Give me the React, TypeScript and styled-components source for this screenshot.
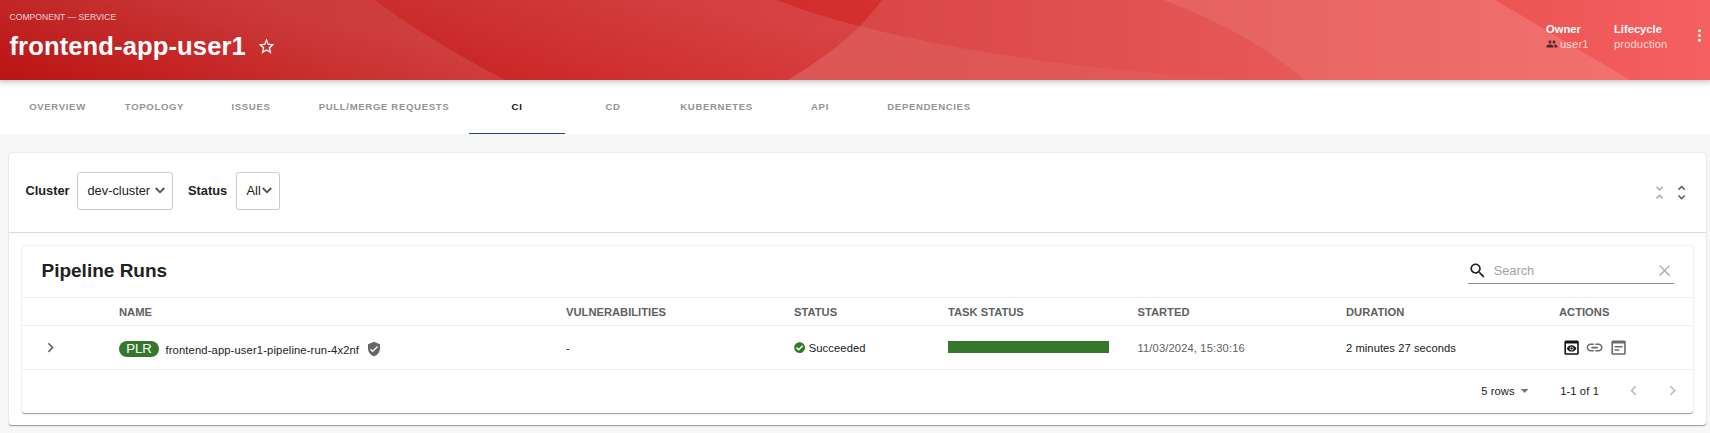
import React from "react";
import styled, { createGlobalStyle } from "styled-components";

const GlobalStyle = createGlobalStyle`
  *, *::before, *::after { box-sizing: border-box; }
  html, body, #root { height: 100%; }
  body {
    margin: 0;
    overflow: hidden;
    background: #f7f7f7;
    color: #212121;
    font-family: "Liberation Sans", Arial, sans-serif;
    font-size: 11.2px;
    line-height: 16px;
  }
`;

const Page = styled.div`
  display: flex;
  flex-direction: column;
  height: 433px;
`;

const Header = styled.header`
  position: relative;
  z-index: 2;
  flex: none;
  display: flex;
  justify-content: space-between;
  height: 80px;
  padding: 0 1px 0 9.5px;
  color: #fff;
  box-shadow: 0 0 6.4px 2.4px rgba(20, 20, 20, 0.3);
`;

const Waves = styled.svg`
  position: absolute;
  inset: 0;
  width: 100%;
  height: 100%;
  z-index: -1;
`;

const TitleBlock = styled.div`
  display: flex;
  flex-direction: column;
  padding-top: 11px;
`;

const Kind = styled.div`
  font-size: 8.6px;
  letter-spacing: 0px;
  line-height: 12px;
  color: rgba(255, 255, 255, 0.8);
`;

const TitleRow = styled.div`
  display: flex;
  align-items: center;
  gap: 11px;
  height: 32px;
  margin-top: 7px;
`;

const Title = styled.h1`
  margin: 0;
  font-size: 25.6px;
  line-height: 32px;
  font-weight: 700;
  letter-spacing: 0.1px;
`;

const Icon = styled.svg<{ $size: number; $color?: string }>`
  display: block;
  flex: none;
  width: ${(p) => p.$size}px;
  height: ${(p) => p.$size}px;
  fill: ${(p) => p.$color ?? "currentColor"};
`;

const HeaderMeta = styled.div`
  display: flex;
  align-items: flex-start;
  padding-top: 21px;
`;

const MetaItem = styled.div<{ $width: number }>`
  width: ${(p) => p.$width}px;
`;

const MetaLabel = styled.div`
  height: 15px;
  font-weight: 700;
`;

const MetaValue = styled.div`
  display: flex;
  align-items: center;
  gap: 2px;
  height: 16px;
  color: rgba(255, 255, 255, 0.75);
  letter-spacing: 0.01071em;
`;

const KebabSlot = styled.div`
  padding-top: 5px;
`;

const Tabs = styled.nav`
  flex: none;
  display: flex;
  height: 54px;
  padding-left: 9px;
  background: #fff;
`;

const Tab = styled.div<{ $width: number; $active?: boolean }>`
  display: flex;
  justify-content: center;
  width: ${(p) => p.$width}px;
  padding-top: 19px;
  border-bottom: 1px solid ${(p) => (p.$active ? "#1b4480" : "transparent")};
  color: ${(p) => (p.$active ? "#181818" : "#949494")};
  font-size: 9.6px;
  font-weight: 700;
  letter-spacing: 0.64px;
`;

const paper = `
  background: #fff;
  border-radius: 3.2px;
  box-shadow: 0 1.6px 0.8px -0.8px rgba(0, 0, 0, 0.2), 0 0.8px 0.8px rgba(0, 0, 0, 0.14),
    0 0.8px 2.4px rgba(0, 0, 0, 0.12);
`;

const Panel = styled.main`
  ${paper}
  display: flex;
  flex-direction: column;
  width: 1697px;
  height: 272px;
  margin: 19px 0 0 9px;
`;

const FilterBar = styled.div`
  display: flex;
  align-items: center;
  height: 80px;
  padding: 0 15px 4px 16.5px;
  border-bottom: 1px solid #dcdcdc;
`;

const FilterLabel = styled.label<{ $width: number }>`
  width: ${(p) => p.$width}px;
  font-size: 12.8px;
  font-weight: 700;
`;

const Select = styled.div<{ $width: number; $after?: number }>`
  display: flex;
  align-items: center;
  justify-content: space-between;
  width: ${(p) => p.$width}px;
  height: 38px;
  margin-right: ${(p) => p.$after ?? 0}px;
  padding: 0 7px 0 9.5px;
  border: 1px solid #c5ccd6;
  border-radius: 3px;
  font-size: 12.8px;
  white-space: nowrap;
`;

const ExpandTools = styled.div`
  display: flex;
  gap: 2.6px;
  margin: 4px 0 0 auto;
`;

const TableCard = styled.section`
  ${paper}
  width: 1671px;
  height: 167px;
  margin: 12.5px 0 0 13px;
`;

const CardToolbar = styled.div`
  display: flex;
  align-items: center;
  justify-content: space-between;
  height: 52px;
  padding: 0 19px 0 19.5px;
  border-bottom: 1px solid #efefef;
`;

const CardTitle = styled.h2`
  margin: 0;
  font-size: 19px;
  line-height: 24px;
  font-weight: 700;
`;

const SearchField = styled.div`
  display: flex;
  align-items: center;
  width: 206px;
  height: 26px;
  border-bottom: 1px solid #8c8c8c;
  font-size: 12.8px;
  color: #a3a3a3;
`;

const SearchText = styled.span`
  flex: 1;
  padding-left: 6.5px;
`;

const ClearSlot = styled.div`
  padding-top: 1px;
`;

const columns = "97px 447px 228px 154px 189.5px 208.5px 213px 1fr";

const HeadRow = styled.div`
  display: grid;
  grid-template-columns: ${columns};
  align-items: center;
  height: 28px;
  padding-top: 1px;
  border-bottom: 1px solid #efefef;
  color: #616161;
  font-weight: 700;
`;

const BodyRow = styled.div`
  display: grid;
  grid-template-columns: ${columns};
  align-items: center;
  height: 44px;
  padding-top: 2px;
  border-bottom: 1px solid #efefef;
`;

const Expander = styled.div`
  padding-left: 19px;
`;

const NameCell = styled.div`
  display: flex;
  align-items: center;
  height: 16px;
  margin-top: 2px;
`;

const Badge = styled.span`
  display: flex;
  align-items: center;
  justify-content: center;
  width: 40px;
  height: 16px;
  margin-right: 6.5px;
  border-radius: 16px;
  background: #35772b;
  color: #fff;
  font-size: 13.2px;
`;

const RunName = styled.span`
  margin-right: 7px;
  padding-top: 2px;
  letter-spacing: 0.0125em;
`;

const StatusCell = styled.div`
  display: flex;
  align-items: center;
  gap: 3.5px;
  letter-spacing: 0.01em;
`;

const TaskBar = styled.div`
  width: 161px;
  height: 12px;
  margin-bottom: 2px;
  background: #35772b;
`;

const Started = styled.div`
  color: #616161;
  letter-spacing: 0.01071em;
`;

const Duration = styled.div`
  letter-spacing: 0.005em;
`;

const Actions = styled.div`
  display: flex;
  gap: 4.6px;
  padding-left: 2.5px;
`;

const Pager = styled.div`
  display: flex;
  align-items: center;
  justify-content: flex-end;
  height: 43px;
  padding-right: 10.5px;
`;

const RowsSelect = styled.div`
  display: flex;
  align-items: center;
  width: 79px;
  letter-spacing: 0.01em;
`;

const PageRange = styled.div`
  width: 64px;
  letter-spacing: 0.01em;
`;

const PageButtons = styled.div`
  display: flex;
  gap: 20px;
`;

const P = {
  star: "M22 9.24l-7.19-.62L12 2 9.19 8.63 2 9.24l5.46 4.73L5.82 21 12 17.27 18.18 21l-1.63-7.03L22 9.24zM12 15.4l-3.76 2.27 1-4.28-3.32-2.88 4.38-.38L12 6.1l1.71 4.04 4.38.38-3.32 2.88 1 4.28L12 15.4z",
  people:
    "M16 11c1.66 0 2.99-1.34 2.99-3S17.66 5 16 5c-1.66 0-3 1.34-3 3s1.34 3 3 3zm-8 0c1.66 0 2.99-1.34 2.99-3S9.66 5 8 5C6.34 5 5 6.34 5 8s1.34 3 3 3zm0 2c-2.33 0-7 1.17-7 3.5V19h14v-2.5c0-2.33-4.67-3.5-7-3.5zm8 0c-.29 0-.62.02-.97.05 1.16.84 1.97 1.97 1.97 3.45V19h6v-2.5c0-2.33-4.67-3.5-7-3.5z",
  kebab:
    "M12 8c1.1 0 2-.9 2-2s-.9-2-2-2-2 .9-2 2 .9 2 2 2zm0 2c-1.1 0-2 .9-2 2s.9 2 2 2 2-.9 2-2-.9-2-2-2zm0 6c-1.1 0-2 .9-2 2s.9 2 2 2 2-.9 2-2-.9-2-2-2z",
  unfoldLess:
    "M7.41 18.59L8.83 20 12 16.83 15.17 20l1.41-1.41L12 14l-4.59 4.59zm9.18-13.18L15.17 4 12 7.17 8.83 4 7.41 5.41 12 10l4.59-4.59z",
  unfoldMore:
    "M12 5.83L15.17 9l1.41-1.41L12 3 7.41 7.59 8.83 9 12 5.83zm0 12.34L8.83 15l-1.41 1.41L12 21l4.59-4.59L15.17 15 12 18.17z",
  search:
    "M15.5 14h-.79l-.28-.27C15.41 12.59 16 11.11 16 9.5 16 5.91 13.09 3 9.5 3S3 5.91 3 9.5 5.91 16 9.5 16c1.61 0 3.09-.59 4.23-1.57l.27.28v.79l5 4.99L20.49 19l-4.99-5zm-6 0C7.01 14 5 11.99 5 9.5S7.01 5 9.5 5 14 7.01 14 9.5 11.99 14 9.5 14z",
  clear:
    "M19 6.41L17.59 5 12 10.59 6.41 5 5 6.41 10.59 12 5 17.59 6.41 19 12 13.41 17.59 19 19 17.59 13.41 12z",
  right: "M10 6L8.59 7.41 13.17 12l-4.58 4.59L10 18l6-6z",
  left: "M15.41 7.41L14 6l-6 6 6 6 1.41-1.41L10.83 12z",
  shield:
    "M12 1L3 5v6c0 5.55 3.84 10.74 9 12 5.16-1.26 9-6.45 9-12V5l-9-4zm-2 16l-4-4 1.41-1.41L10 14.17l6.59-6.59L18 9l-8 8z",
  check:
    "M504 256c0 136.967-111.033 248-248 248S8 392.967 8 256 119.033 8 256 8s248 111.033 248 248zM227.314 387.314l184-184c6.248-6.248 6.248-16.379 0-22.627l-22.627-22.627c-6.248-6.249-16.379-6.249-22.628 0L216 308.118l-70.059-70.059c-6.248-6.248-16.379-6.248-22.628 0l-22.627 22.627c-6.248 6.248-6.248 16.379 0 22.627l104 104c6.249 6.249 16.379 6.249 22.628.001z",
  link: "M3.9 12c0-1.71 1.39-3.1 3.1-3.1h4V7H7c-2.76 0-5 2.24-5 5s2.24 5 5 5h4v-1.9H7c-1.71 0-3.1-1.39-3.1-3.1zM8 13h8v-2H8v2zm9-6h-4v1.9h4c1.71 0 3.1 1.39 3.1 3.1s-1.39 3.1-3.1 3.1h-4V17h4c2.76 0 5-2.24 5-5s-2.24-5-5-5z",
  preview:
    "M19 3H5c-1.11 0-2 .9-2 2v14c0 1.1.89 2 2 2h14c1.1 0 2-.9 2-2V5c0-1.1-.89-2-2-2zm0 16H5V7h14v12zm-5.5-6c0 .83-.67 1.5-1.5 1.5s-1.5-.67-1.5-1.5.67-1.5 1.5-1.5 1.5.67 1.5 1.5zM12 9c-2.73 0-5.06 1.66-6 4 .94 2.34 3.27 4 6 4s5.06-1.66 6-4c-.94-2.34-3.27-4-6-4zm0 6.5c-1.38 0-2.5-1.12-2.5-2.5s1.12-2.5 2.5-2.5 2.5 1.12 2.5 2.5-1.12 2.5-2.5 2.5z",
  note: "M19 3H5c-1.11 0-2 .9-2 2v14c0 1.1.89 2 2 2h14c1.1 0 2-.9 2-2V5c0-1.1-.89-2-2-2zm0 16H5V7h14v12zm-2-7H7v-2h10v2zm-4 4H7v-2h6v2z",
  caret: "M7 10l5 5 5-5z",
};

type GlyphProps = { d: string; size: number; color?: string; box?: number };

const Glyph = ({ d, size, color, box = 24 }: GlyphProps) => (
  <Icon $size={size} $color={color} viewBox={`0 0 ${box} ${box}`} aria-hidden>
    <path d={d} />
  </Icon>
);

const Chevron = () => (
  <svg width="10" height="7" viewBox="0 0 10 7" fill="none" aria-hidden>
    <path d="M0.8 1L5 5.3L9.2 1" stroke="#505050" strokeWidth="1.8" />
  </svg>
);

const HeaderWaves = () => (
  <Waves viewBox="0 0 1710 80" preserveAspectRatio="none" aria-hidden>
    <defs>
      <linearGradient id="base" x1="0" x2="1" y1="0" y2="0">
        <stop offset="0" stopColor="#bc1515" />
        <stop offset="0.5" stopColor="#d42e2e" />
        <stop offset="1" stopColor="#f56060" />
      </linearGradient>
      <linearGradient id="w1" gradientUnits="userSpaceOnUse" x1="100" y1="95" x2="127" y2="-25">
        <stop offset="0" stopColor="#fff" stopOpacity="0" />
        <stop offset="1" stopColor="#fff" stopOpacity="0.13" />
      </linearGradient>
      <linearGradient id="w2" gradientUnits="userSpaceOnUse" x1="520" y1="90" x2="540" y2="-20">
        <stop offset="0" stopColor="#fff" stopOpacity="0.01" />
        <stop offset="1" stopColor="#fff" stopOpacity="0.1" />
      </linearGradient>
      <linearGradient id="w3" gradientUnits="userSpaceOnUse" x1="788" y1="0" x2="1304" y2="0">
        <stop offset="0" stopColor="#fff" stopOpacity="0.12" />
        <stop offset="1" stopColor="#fff" stopOpacity="0.09" />
      </linearGradient>
      <linearGradient id="w4" gradientUnits="userSpaceOnUse" x1="1160" y1="0" x2="1630" y2="0">
        <stop offset="0" stopColor="#fff" stopOpacity="0.18" />
        <stop offset="1" stopColor="#fff" stopOpacity="0.13" />
      </linearGradient>
      <linearGradient id="w5" gradientUnits="userSpaceOnUse" x1="788" y1="0" x2="1240" y2="0">
        <stop offset="0" stopColor="#fff" stopOpacity="0.1" />
        <stop offset="1" stopColor="#fff" stopOpacity="0.02" />
      </linearGradient>
    </defs>
    <rect width="1710" height="80" fill="url(#base)" />
    <path d="M0 0H374.5Q432 42 505 80H0Z" fill="url(#w1)" />
    <path d="M374.5 0H776.5Q815 15 859 26Q830 54 788 80H505Q432 42 374.5 0Z" fill="url(#w2)" />
    <path d="M882 0H1163.600Q1255 35 1304 80H788Q852 42 882 0Z" fill="url(#w3)" />
    <path d="M859 26Q1010 65 1240 80H788Q830 54 859 26Z" fill="url(#w5)" />
    <path d="M1163.600 0H1495L1630 80H1304Q1255 35 1163.600 0Z" fill="url(#w4)" />
  </Waves>
);

const tabs = [
  { label: "OVERVIEW", width: 97 },
  { label: "TOPOLOGY", width: 97 },
  { label: "ISSUES", width: 96 },
  { label: "PULL/MERGE REQUESTS", width: 170 },
  { label: "CI", width: 96, active: true },
  { label: "CD", width: 96 },
  { label: "KUBERNETES", width: 111 },
  { label: "API", width: 96 },
  { label: "DEPENDENCIES", width: 122 },
];

const heads = ["", "NAME", "VULNERABILITIES", "STATUS", "TASK STATUS", "STARTED", "DURATION", "ACTIONS"];

export default function App() {
  return (
    <Page>
      <GlobalStyle />
      <Header>
        <HeaderWaves />
        <TitleBlock>
          <Kind>COMPONENT — SERVICE</Kind>
          <TitleRow>
            <Title>frontend-app-user1</Title>
            <Glyph d={P.star} size={19} />
          </TitleRow>
        </TitleBlock>
        <HeaderMeta>
          <MetaItem $width={68}>
            <MetaLabel>Owner</MetaLabel>
            <MetaValue>
              <Glyph d={P.people} size={12} color="#4d2a2a" />
              user1
            </MetaValue>
          </MetaItem>
          <MetaItem $width={76}>
            <MetaLabel>Lifecycle</MetaLabel>
            <MetaValue>production</MetaValue>
          </MetaItem>
          <KebabSlot>
            <Glyph d={P.kebab} size={19} />
          </KebabSlot>
        </HeaderMeta>
      </Header>
      <Tabs>
        {tabs.map((t) => (
          <Tab key={t.label} $width={t.width} $active={t.active}>
            {t.label}
          </Tab>
        ))}
      </Tabs>
      <Panel>
        <FilterBar>
          <FilterLabel $width={51.5}>Cluster</FilterLabel>
          <Select $width={96} $after={15}>
            dev-cluster
            <Chevron />
          </Select>
          <FilterLabel $width={48}>Status</FilterLabel>
          <Select $width={44}>
            All
            <Chevron />
          </Select>
          <ExpandTools>
            <Glyph d={P.unfoldLess} size={19.2} color="#b0b0b0" />
            <Glyph d={P.unfoldMore} size={19.2} color="#606060" />
          </ExpandTools>
        </FilterBar>
        <TableCard>
          <CardToolbar>
            <CardTitle>Pipeline Runs</CardTitle>
            <SearchField>
              <Glyph d={P.search} size={19.2} color="#212121" />
              <SearchText>Search</SearchText>
              <ClearSlot>
                <Glyph d={P.clear} size={19.2} color="#b5b5b5" />
              </ClearSlot>
            </SearchField>
          </CardToolbar>
          <HeadRow>
            {heads.map((h) => (
              <div key={h}>{h}</div>
            ))}
          </HeadRow>
          <BodyRow>
            <Expander>
              <Glyph d={P.right} size={19.2} color="#666" />
            </Expander>
            <NameCell>
              <Badge>PLR</Badge>
              <RunName>frontend-app-user1-pipeline-run-4x2nf</RunName>
              <Glyph d={P.shield} size={16} color="#666" />
            </NameCell>
            <div>-</div>
            <StatusCell>
              <Glyph d={P.check} size={11.2} color="#35772b" box={512} />
              Succeeded
            </StatusCell>
            <TaskBar />
            <Started>11/03/2024, 15:30:16</Started>
            <Duration>2 minutes 27 seconds</Duration>
            <Actions>
              <Glyph d={P.preview} size={19.2} color="#151515" />
              <Glyph d={P.link} size={19.2} color="#6a6a6a" />
              <Glyph d={P.note} size={19.2} color="#6a6a6a" />
            </Actions>
          </BodyRow>
          <Pager>
            <RowsSelect>
              5 rows
              <Glyph d={P.caret} size={19.2} color="#757575" />
            </RowsSelect>
            <PageRange>1-1 of 1</PageRange>
            <PageButtons>
              <Glyph d={P.left} size={19.2} color="#bdbdbd" />
              <Glyph d={P.right} size={19.2} color="#bdbdbd" />
            </PageButtons>
          </Pager>
        </TableCard>
      </Panel>
    </Page>
  );
}
